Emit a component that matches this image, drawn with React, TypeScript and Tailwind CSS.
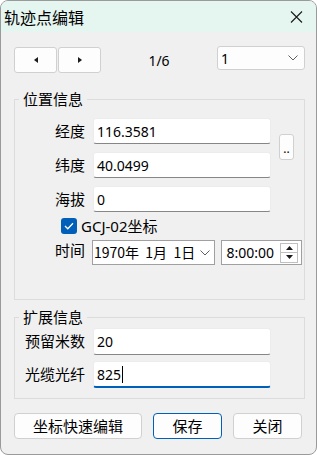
import React from "react";

const font = { fontFamily: '"Segoe UI", "Noto Sans", "Noto Sans CJK SC", sans-serif' };

function TextInput({ value, active = false, h = "h-[26px]" }: { value: string; active?: boolean; h?: string }) {
  return (
    <div
      className={`${h} w-[178px] bg-white rounded-[3px] border border-[#ececec] flex items-center pl-[3px] text-[14px] text-black ${
        active ? "border-b-2 border-b-[#005fb8]" : "border-b-[#868686]"
      }`}
    >
      <span>{value}</span>
      {active && <span className="w-px h-[17px] bg-black ml-px" />}
    </div>
  );
}

export default function App() {
  return (
    <div
      style={font}
      className="w-[317px] h-[455px] flex flex-col bg-[#f0f0f0] border border-[#9a9a9a] rounded-[8px] overflow-hidden text-black"
    >
      {/* Title bar */}
      <div className="h-[31px] shrink-0 bg-[#e5f5ef] flex items-center justify-between pl-[3px] pr-[13px]">
        <span className="text-[16px] leading-none" style={{ fontFamily: '"Noto Sans CJK SC", sans-serif' }}>
          轨迹点编辑
        </span>
        <svg width="13" height="12" viewBox="0 0 13 12" className="mt-[1px]">
          <path d="M1 0.5 L12 11.5 M12 0.5 L1 11.5" stroke="#1a1a1a" strokeWidth="1.1" fill="none" />
        </svg>
      </div>

      {/* Body */}
      <div className="flex flex-col pl-[13px] pr-[11px] pt-[14px]">
        {/* Nav row */}
        <div className="flex items-start">
          <div className="flex gap-[1px] mt-[1px]">
            <button className="w-[43px] h-[26px] bg-[#fdfdfd] border border-[#d0d0d0] rounded-[3px] flex items-center justify-center">
              <svg width="4" height="6" viewBox="0 0 4 6">
                <path d="M4 0 L0 3 L4 6 Z" fill="#1a1a1a" />
              </svg>
            </button>
            <button className="w-[43px] h-[26px] bg-[#fdfdfd] border border-[#d0d0d0] rounded-[3px] flex items-center justify-center">
              <svg width="4" height="6" viewBox="0 0 4 6">
                <path d="M0 0 L4 3 L0 6 Z" fill="#1a1a1a" />
              </svg>
            </button>
          </div>
          <div className="w-[116px] h-[28px] flex items-center justify-center text-[14px]">1/6</div>
          <div className="w-[88px] h-[24px] bg-[#fdfdfd] border border-[#d0d0d0] rounded-[3px] flex items-center justify-between pl-[3px] pr-[6px] text-[14px]">
            <span>1</span>
            <svg width="10" height="6" viewBox="0 0 10 6">
              <path d="M0.5 0.5 L5 5 L9.5 0.5" stroke="#606060" strokeWidth="1" fill="none" />
            </svg>
          </div>
        </div>

        {/* Group 1 */}
        <fieldset className="mt-[16px] border border-[#dcdcdc] w-[291px] pt-[10px] pb-[34px]">
          <legend className="ml-[4px] px-[4px] text-[15px] leading-[18px]" style={{ fontFamily: '"Noto Sans CJK SC", sans-serif' }}>
            位置信息
          </legend>
          <div className="grid grid-cols-[70px_178px_15px] gap-x-[8px] gap-y-[8px] items-center">
            <span className="text-right text-[15px] leading-[20px]">经度</span>
            <TextInput value="116.3581" />
            <div className="row-span-2 self-center flex items-center justify-center w-[15px] h-[26px] bg-[#fdfdfd] border border-[#d0d0d0] rounded-[3px] text-[12px] leading-none pt-[4px] -mt-[3px]">
              ..
            </div>
            <span className="text-right text-[15px] leading-[20px]">纬度</span>
            <TextInput value="40.0499" />
            <span className="text-right text-[15px] leading-[20px]">海拔</span>
            <TextInput value="0" />
          </div>
          <div className="flex items-center mt-[6px] pl-[46px] h-[16px]">
            <div className="w-[16px] h-[16px] rounded-[3px] bg-[#005fb8] flex items-center justify-center">
              <svg width="10" height="8" viewBox="0 0 10 8">
                <path d="M1 4 L3.8 6.8 L9 1.2" stroke="white" strokeWidth="1.3" fill="none" />
              </svg>
            </div>
            <span className="ml-[4px] text-[15px] leading-[16px]">GCJ-02坐标</span>
          </div>
          <div className="flex items-start mt-[6px]">
            <span className="w-[70px] text-right text-[15px] leading-[20px]">时间</span>
            <div
              className="ml-[7px] w-[123px] h-[25px] bg-white border border-[#a0a0a0] flex items-center justify-between pl-[1px] pr-[4px] text-[14px]"
              style={{ fontFamily: '"Noto Sans CJK SC", sans-serif' }}
            >
              <span className="whitespace-pre">1970年  1月  1日</span>
              <svg width="10" height="6" viewBox="0 0 10 6">
                <path d="M0.5 0.5 L5 5 L9.5 0.5" stroke="#606060" strokeWidth="1" fill="none" />
              </svg>
            </div>
            <div className="ml-[6px] w-[81px] h-[25px] bg-white border border-[#a0a0a0] flex items-center justify-end pr-[3px] text-[14px]">
              <span className="mr-[6px]">8:00:00</span>
              <div className="w-[18px] h-[20px] border border-[#c0c0c0] flex flex-col">
                <div className="flex-1 flex items-center justify-center border-b border-[#c0c0c0]">
                  <svg width="7" height="4" viewBox="0 0 7 4">
                    <path d="M0 4 L3.5 0 L7 4 Z" fill="#1a1a1a" />
                  </svg>
                </div>
                <div className="flex-1 flex items-center justify-center">
                  <svg width="7" height="4" viewBox="0 0 7 4">
                    <path d="M0 0 L3.5 4 L7 0 Z" fill="#1a1a1a" />
                  </svg>
                </div>
              </div>
            </div>
          </div>
        </fieldset>

        {/* Group 2 */}
        <fieldset className="mt-[8px] border border-[#dcdcdc] w-[291px] pt-[2px] pb-[10px]">
          <legend className="ml-[4px] px-[4px] text-[15px] leading-[18px]" style={{ fontFamily: '"Noto Sans CJK SC", sans-serif' }}>
            扩展信息
          </legend>
          <div className="grid grid-cols-[70px_178px] gap-x-[8px] gap-y-[6px] items-center">
            <span className="text-right text-[15px]">预留米数</span>
            <TextInput value="20" h="h-[27px]" />
            <span className="text-right text-[15px]">光缆光纤</span>
            <TextInput value="825" active h="h-[27px]" />
          </div>
        </fieldset>

        {/* Buttons */}
        <div className="flex mt-[14px] gap-[11px]">
          <button className="w-[128px] h-[26px] bg-[#fdfdfd] border border-[#d0d0d0] rounded-[4px] text-[15px] leading-none">
            坐标快速编辑
          </button>
          <button className="w-[69px] h-[26px] bg-[#fdfdfd] border border-[#005fb8] rounded-[4px] text-[15px] leading-none">
            保存
          </button>
          <button className="w-[69px] h-[26px] bg-[#fdfdfd] border border-[#d0d0d0] rounded-[4px] text-[15px] leading-none">
            关闭
          </button>
        </div>
      </div>
    </div>
  );
}
